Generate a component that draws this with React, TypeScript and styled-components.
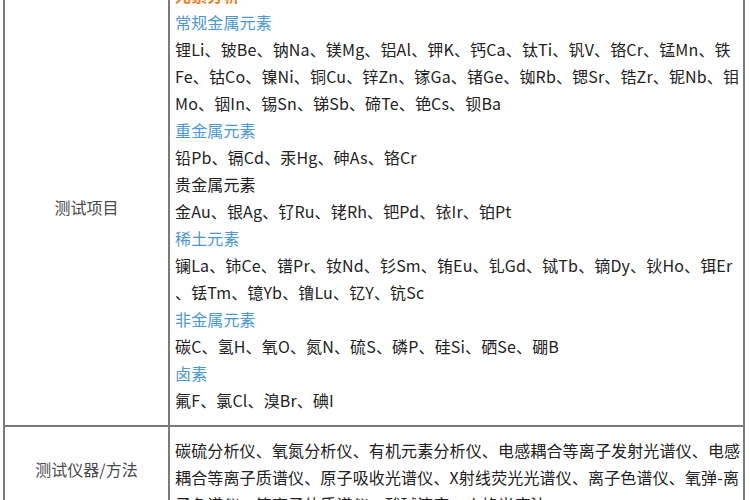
import styled, { createGlobalStyle } from "styled-components";

type Tone = "title" | "group" | "plain";

interface LineItem {
  text: string;
  tone: Tone;
}

const elementLines: LineItem[] = [
  { text: "元素分析", tone: "title" },
  { text: "常规金属元素", tone: "group" },
  { text: "锂Li、铍Be、钠Na、镁Mg、铝Al、钾K、钙Ca、钛Ti、钒V、铬Cr、锰Mn、铁", tone: "plain" },
  { text: "Fe、钴Co、镍Ni、铜Cu、锌Zn、镓Ga、锗Ge、铷Rb、锶Sr、锆Zr、铌Nb、钼", tone: "plain" },
  { text: "Mo、铟In、锡Sn、锑Sb、碲Te、铯Cs、钡Ba", tone: "plain" },
  { text: "重金属元素", tone: "group" },
  { text: "铅Pb、镉Cd、汞Hg、砷As、铬Cr", tone: "plain" },
  { text: "贵金属元素", tone: "plain" },
  { text: "金Au、银Ag、钌Ru、铑Rh、钯Pd、铱Ir、铂Pt", tone: "plain" },
  { text: "稀土元素", tone: "group" },
  { text: "镧La、铈Ce、镨Pr、钕Nd、钐Sm、铕Eu、钆Gd、铽Tb、镝Dy、钬Ho、铒Er", tone: "plain" },
  { text: "、铥Tm、镱Yb、镥Lu、钇Y、钪Sc", tone: "plain" },
  { text: "非金属元素", tone: "group" },
  { text: "碳C、氢H、氧O、氮N、硫S、磷P、硅Si、硒Se、硼B", tone: "plain" },
  { text: "卤素", tone: "group" },
  { text: "氟F、氯Cl、溴Br、碘I", tone: "plain" },
];

const methodLines: LineItem[] = [
  { text: "碳硫分析仪、氧氮分析仪、有机元素分析仪、电感耦合等离子发射光谱仪、电感", tone: "plain" },
  { text: "耦合等离子质谱仪、原子吸收光谱仪、X射线荧光光谱仪、离子色谱仪、氧弹-离", tone: "plain" },
  { text: "子色谱仪、等离子体质谱仪、酸碱滴定、火焰光度法", tone: "plain" },
];

export default function App() {
  return (
    <>
      <GlobalStyle />
      <Page>
        <Table>
          <tbody>
            <tr>
              <LabelCell $top={false}>测试项目</LabelCell>
              <ContentCell $padTop={7}>
                {elementLines.map((line, i) => (
                  <Line key={i} $tone={line.tone}>
                    {line.text}
                  </Line>
                ))}
              </ContentCell>
            </tr>
            <tr>
              <LabelCell $top>测试仪器/方法</LabelCell>
              <ContentCell $padTop={10}>
                {methodLines.map((line, i) => (
                  <Line key={i} $tone={line.tone}>
                    {line.text}
                  </Line>
                ))}
              </ContentCell>
            </tr>
          </tbody>
        </Table>
      </Page>
    </>
  );
}

const GlobalStyle = createGlobalStyle`
  html, body {
    margin: 0;
    padding: 0;
    background: #ffffff;
    overflow: hidden;
  }
  body {
    font-family: "Noto Sans CJK SC", "Noto Sans", sans-serif;
  }
`;

const Page = styled.div`
  width: 750px;
  height: 500px;
  overflow: hidden;
  padding-left: 3px;
  box-sizing: border-box;
`;

const Table = styled.table`
  width: 742px;
  margin-top: -27px;
  border-collapse: collapse;
  table-layout: fixed;
  td {
    border: 2px solid #7a7a7a;
  }
`;

const LabelCell = styled.td<{ $top: boolean }>`
  width: 163px;
  text-align: center;
  vertical-align: ${(p) => (p.$top ? "top" : "middle")};
  padding: ${(p) => (p.$top ? "30px 0 0" : "14px 0 0")};
  font-size: 16px;
  line-height: 24px;
  color: #4a4a4a;
`;

const ContentCell = styled.td<{ $padTop: number }>`
  padding: ${(p) => p.$padTop}px 4px 11px 5px;
  vertical-align: top;
`;

const toneColor: Record<Tone, string> = {
  title: "#f07d1e",
  group: "#4a98d6",
  plain: "#222222",
};

const Line = styled.div<{ $tone: Tone }>`
  font-size: 16px;
  line-height: 27px;
  height: 27px;
  white-space: nowrap;
  letter-spacing: 0.15px;
  color: ${(p) => toneColor[p.$tone]};
  font-weight: ${(p) => (p.$tone === "title" ? 700 : 400)};
`;
